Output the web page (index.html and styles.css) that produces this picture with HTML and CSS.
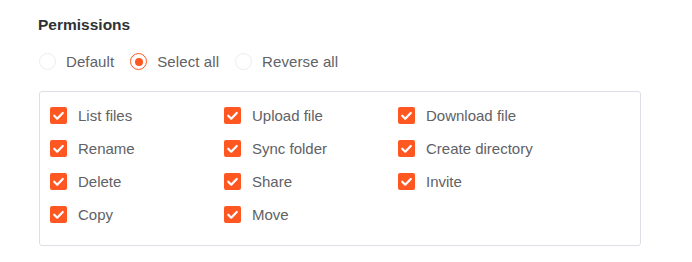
FILE: index.html
```html
<!DOCTYPE html>
<html>
<head>
<meta charset="utf-8">
<link rel="stylesheet" href="styles.css">
</head>
<body>
<div class="panel">
  <div class="title">Permissions</div>
  <div class="radios">
    <label class="radio"><span class="circle"></span><span class="rlabel">Default</span></label>
    <label class="radio on"><span class="circle"></span><span class="rlabel">Select all</span></label>
    <label class="radio"><span class="circle"></span><span class="rlabel">Reverse all</span></label>
  </div>
  <div class="box">
    <div class="grid">
      <label class="cb"><span class="mark"><svg viewBox="0 0 16 16"><path d="M4 8.2l2.8 2.8 5.2-5.4"/></svg></span>List files</label>
      <label class="cb"><span class="mark"><svg viewBox="0 0 16 16"><path d="M4 8.2l2.8 2.8 5.2-5.4"/></svg></span>Upload file</label>
      <label class="cb"><span class="mark"><svg viewBox="0 0 16 16"><path d="M4 8.2l2.8 2.8 5.2-5.4"/></svg></span>Download file</label>
      <label class="cb"><span class="mark"><svg viewBox="0 0 16 16"><path d="M4 8.2l2.8 2.8 5.2-5.4"/></svg></span>Rename</label>
      <label class="cb"><span class="mark"><svg viewBox="0 0 16 16"><path d="M4 8.2l2.8 2.8 5.2-5.4"/></svg></span>Sync folder</label>
      <label class="cb"><span class="mark"><svg viewBox="0 0 16 16"><path d="M4 8.2l2.8 2.8 5.2-5.4"/></svg></span>Create directory</label>
      <label class="cb"><span class="mark"><svg viewBox="0 0 16 16"><path d="M4 8.2l2.8 2.8 5.2-5.4"/></svg></span>Delete</label>
      <label class="cb"><span class="mark"><svg viewBox="0 0 16 16"><path d="M4 8.2l2.8 2.8 5.2-5.4"/></svg></span>Share</label>
      <label class="cb"><span class="mark"><svg viewBox="0 0 16 16"><path d="M4 8.2l2.8 2.8 5.2-5.4"/></svg></span>Invite</label>
      <label class="cb"><span class="mark"><svg viewBox="0 0 16 16"><path d="M4 8.2l2.8 2.8 5.2-5.4"/></svg></span>Copy</label>
      <label class="cb"><span class="mark"><svg viewBox="0 0 16 16"><path d="M4 8.2l2.8 2.8 5.2-5.4"/></svg></span>Move</label>
    </div>
  </div>
</div>
</body>
</html>
```
FILE: styles.css
```css
html, body {
  margin: 0;
  padding: 0;
  background: #ffffff;
}
body {
  font-family: "Liberation Sans", Arial, sans-serif;
  color: #606266;
}
.panel {
  padding: 16px 51px 0 39px;
  width: 602px;
}
.title {
  font-size: 15.5px;
  font-weight: bold;
  color: #303133;
  line-height: 18px;
  margin-left: -1px;
}
.radios {
  display: flex;
  align-items: center;
  margin-top: 18px;
  height: 18px;
}
.radio {
  display: flex;
  align-items: center;
  margin-right: 16px;
  font-size: 15px;
  letter-spacing: 0.1px;
}
.circle {
  width: 15px;
  height: 15px;
  border: 1px solid #ebedf0;
  border-radius: 50%;
  box-sizing: content-box;
  display: flex;
  align-items: center;
  justify-content: center;
  margin-top: 1px;
}
.radio.on .circle {
  border-color: #ff5722;
}
.radio.on .circle::after {
  content: "";
  width: 8px;
  height: 8px;
  border-radius: 50%;
  background: #ff5722;
}
.rlabel {
  margin-left: 10px;
}
.box {
  margin-top: 21px;
  border: 1px solid #dcdfe6;
  border-radius: 3px;
  padding: 7px 10px 14px;
  height: 132px;
  box-sizing: content-box;
}
.grid {
  display: grid;
  grid-template-columns: 174px 174px 174px;
  grid-auto-rows: 33px;
}
.cb {
  display: flex;
  align-items: center;
  font-size: 15px;
}
.mark {
  width: 17px;
  height: 17px;
  border-radius: 2px;
  background: #ff5722;
  margin-right: 11px;
  display: flex;
  flex: none;
}
.mark svg {
  width: 17px;
  height: 17px;
  fill: none;
  stroke: #ffffff;
  stroke-width: 2.1;
  stroke-linecap: round;
  stroke-linejoin: round;
}
```
